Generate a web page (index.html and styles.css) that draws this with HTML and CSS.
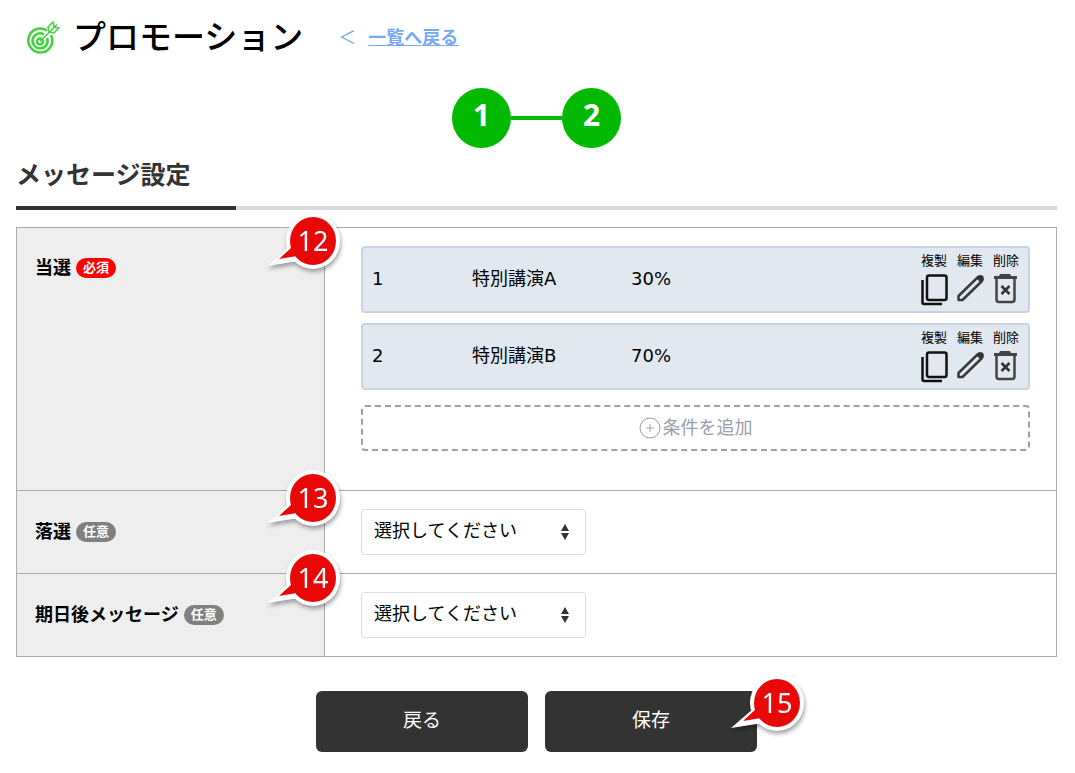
FILE: index.html
```html
<!DOCTYPE html>
<html lang="ja">
<head>
  <meta charset="UTF-8">
  <meta name="viewport" content="width=device-width, initial-scale=1">
  <title>プロモーション</title>
  <link rel="stylesheet" href="styles.css">
</head>
<body>

  <!-- 共通アイコン -->
  <svg class="sprite" aria-hidden="true">
    <symbol id="icon-copy" viewBox="0 0 27 32">
      <rect x="6" y="1.500" width="19.500" height="24.500" rx="2" fill="none" stroke="#111" stroke-width="2.500"/>
      <path d="M1.500 6v22.500q0 1.500 1.500 1.500h18" fill="none" stroke="#111" stroke-width="2.500"/>
    </symbol>
    <symbol id="icon-edit" viewBox="0 0 27 32">
      <path d="M1.500 26v-4L20.500 3.500q2-2 4 0t0 4L5.500 26z" fill="none" stroke="#3a3a3a" stroke-width="2.500" stroke-linejoin="round"/>
      <path d="M19.500 4.500l3-3q2-1 4 1v3l-3 3z" fill="#333"/>
    </symbol>
    <symbol id="icon-delete" viewBox="0 0 27 32">
      <path d="M7 0h10l1 2h6v3H1V2h5z" fill="#444"/>
      <path d="M3.500 4v21.500q0 2.500 2.500 2.500h13q2.500 0 2.500-2.500V4" fill="none" stroke="#444" stroke-width="2.500"/>
      <path d="M8.500 12l8 8M16.500 12l-8 8" fill="none" stroke="#333" stroke-width="2.500"/>
    </symbol>
    <symbol id="balloon" viewBox="0 0 84 64">
      <ellipse cx="50" cy="30" rx="27" ry="28" fill="#fff"/>
      <path d="M4 55L26 36l10 14z" fill="#fff"/>
      <ellipse cx="50" cy="30" rx="23" ry="24" fill="#e90808"/>
      <path d="M16 48L29 36l5 9z" fill="#e90808"/>
    </symbol>
  </svg>

  <header class="page-header">
    <svg class="logo" viewBox="0 0 33 34" fill="none" stroke="#43d13c" stroke-width="2.500">
      <path d="M20 9.500A12 12 0 1 0 24 14"/>
      <path d="M17 13.500A7.500 7.500 0 1 0 20 17"/>
      <circle cx="13" cy="20.500" r="3"/>
      <path d="M13 20.500L30 3.500M22 11l-1-5 5-5 1 5 5 1-5 5z" stroke-width="1.500"/>
    </svg>
    <h1>プロモーション</h1>
    <nav class="back">
      <span>＜</span>
      <a href="#">一覧へ戻る</a>
    </nav>
  </header>

  <main>
    <ol class="steps">
      <li>1</li>
      <li>2</li>
    </ol>

    <h2>メッセージ設定</h2>

    <form id="messageForm">
      <table class="settings">
        <tr>
          <th class="top" scope="row">
            <div class="label">当選 <span class="badge required">必須</span></div>
            <svg class="pin first"><use href="#balloon"/><text x="50" y="40">12</text></svg>
          </th>
          <td class="conditions">
            <div class="item">
              <span class="no">1</span>
              <span class="name">特別講演A</span>
              <span class="rate">30%</span>
              <div class="actions">
                <button type="button">複製<svg><use href="#icon-copy"/></svg></button>
                <button type="button">編集<svg><use href="#icon-edit"/></svg></button>
                <button type="button">削除<svg><use href="#icon-delete"/></svg></button>
              </div>
            </div>
            <div class="item">
              <span class="no">2</span>
              <span class="name">特別講演B</span>
              <span class="rate">70%</span>
              <div class="actions">
                <button type="button">複製<svg><use href="#icon-copy"/></svg></button>
                <button type="button">編集<svg><use href="#icon-edit"/></svg></button>
                <button type="button">削除<svg><use href="#icon-delete"/></svg></button>
              </div>
            </div>
            <button type="button" class="add">
              <svg viewBox="0 0 22 22" fill="none" stroke="#9a9eab">
                <circle cx="11" cy="11" r="10"/>
                <path d="M7 11h8M11 7v8"/>
              </svg>
              条件を追加
            </button>
          </td>
        </tr>
        <tr>
          <th scope="row">
            <div class="label"><label for="lose">落選</label> <span class="badge">任意</span></div>
            <svg class="pin"><use href="#balloon"/><text x="50" y="40">13</text></svg>
          </th>
          <td>
            <div class="select">
              <select id="lose" name="lose">
                <option value="">選択してください</option>
              </select>
              <svg viewBox="0 0 8 16"><path d="M4 0l4 7H0zM4 16L0 9h8z" fill="#333"/></svg>
            </div>
          </td>
        </tr>
        <tr>
          <th scope="row">
            <div class="label"><label for="expired">期日後メッセージ</label> <span class="badge">任意</span></div>
            <svg class="pin last"><use href="#balloon"/><text x="50" y="40">14</text></svg>
          </th>
          <td>
            <div class="select">
              <select id="expired" name="expired">
                <option value="">選択してください</option>
              </select>
              <svg viewBox="0 0 8 16"><path d="M4 0l4 7H0zM4 16L0 9h8z" fill="#333"/></svg>
            </div>
          </td>
        </tr>
      </table>

      <div class="buttons">
        <button type="button" class="btn">戻る</button>
        <div class="save">
          <button type="submit" class="btn">保存</button>
          <svg class="pin"><use href="#balloon"/><text x="50" y="40">15</text></svg>
        </div>
      </div>
    </form>
  </main>

</body>
</html>
```
FILE: styles.css
```css
* {
  box-sizing: border-box;
}
body {
  margin: 0;
  padding: 0 18px 20px 16px;
  font-family: "DejaVu Sans", "Noto Sans CJK JP", sans-serif;
  font-size: 18px;
  line-height: 26px;
  color: #000;
  background: #fff;
}
button, select {
  font: inherit;
  color: inherit;
}
button {
  cursor: pointer;
}
.sprite {
  display: none;
}
.page-header {
  display: flex;
  align-items: center;
  height: 76px;
  padding-left: 11px;
}
.logo {
  width: 33px;
  height: 34px;
}
h1 {
  margin: 0 35px 0 13px;
  font-size: 33px;
  font-weight: 500;
  line-height: 48px;
}
.back {
  display: flex;
  gap: 12px;
  color: #74a9fa;
}
.back a {
  color: inherit;
  font-weight: bold;
}
.steps {
  display: flex;
  justify-content: center;
  gap: 51px;
  margin: 12px 0 0;
  padding: 0;
  list-style: none;
}
.steps li {
  position: relative;
  width: 59px;
  height: 60px;
  border-radius: 50%;
  background: #00b900;
  color: #fff;
  font-family: "Noto Sans", sans-serif;
  font-size: 30px;
  font-weight: bold;
  line-height: 54px;
  text-align: center;
}
.steps li + li::before {
  content: "";
  position: absolute;
  right: 100%;
  top: 28px;
  width: 51px;
  height: 4px;
  background: #00b900;
}
h2 {
  position: relative;
  margin: 0 0 17px;
  padding: 10px 0 12px;
  border-bottom: 4px solid #d9d9d9;
  color: #333;
  font-size: 25px;
  line-height: 36px;
}
h2::after {
  content: "";
  position: absolute;
  left: 0;
  top: 100%;
  width: 220px;
  height: 4px;
  background: #333;
}
.settings {
  width: 100%;
  border-collapse: collapse;
}
th, td {
  border: 1px solid #aaa;
}
th {
  position: relative;
  width: 308px;
  padding: 0 18px;
  background: #eee;
  text-align: left;
}
th.top {
  padding-top: 27px;
  vertical-align: top;
}
td {
  padding: 18px 26px 18px 36px;
}
td.conditions {
  padding-bottom: 39px;
}
.label {
  display: flex;
  align-items: center;
  gap: 5px;
}
.badge {
  padding: 0 7px;
  border-radius: 10px;
  background: #808080;
  color: #fff;
  font-size: 13px;
  line-height: 20px;
}
.badge.required {
  background: #f00;
}
.item {
  display: flex;
  align-items: center;
  height: 67px;
  margin-bottom: 10px;
  padding: 0 9px 2px;
  border: 2px solid #c9d3e3;
  border-radius: 4px;
  background: #e1e8f0;
}
.no {
  width: 100px;
}
.name {
  width: 159px;
}
.actions {
  display: flex;
  gap: 10px;
  margin-left: auto;
}
.actions button {
  width: 26px;
  padding: 0;
  border: none;
  background: none;
  font-size: 13px;
  line-height: 20px;
  white-space: nowrap;
}
.actions svg {
  display: block;
  width: 27px;
  height: 32px;
  margin-top: 3px;
}
.add {
  display: flex;
  align-items: center;
  justify-content: center;
  gap: 2px;
  width: 100%;
  height: 46px;
  margin-top: 15px;
  border: 2px dashed #9a9eae;
  border-radius: 4px;
  background: #fff;
  color: #9a9eab;
}
.add svg {
  width: 22px;
  height: 22px;
}
.select {
  position: relative;
  width: 225px;
}
.select select {
  display: block;
  width: 100%;
  height: 46px;
  padding: 0 12px 3px;
  border: 1px solid #ddd;
  border-radius: 4px;
  background: #fff;
  appearance: none;
}
.select svg {
  position: absolute;
  right: 17px;
  top: 15px;
  width: 8px;
  height: 16px;
  pointer-events: none;
}
.buttons {
  display: flex;
  justify-content: center;
  gap: 17px;
  margin-top: 34px;
}
.btn {
  width: 212px;
  height: 61px;
  padding: 0 0 3px;
  border: none;
  border-radius: 6px;
  background: #333;
  color: #fff;
  font-size: 19px;
}
.save {
  position: relative;
}

/* 吹き出し番号 */
.pin {
  position: absolute;
  right: -23px;
  top: -23px;
  z-index: 1;
  width: 84px;
  height: 64px;
  overflow: visible;
  filter: drop-shadow(1px 3px 2px rgba(0, 0, 0, 0.35));
}
.pin.first {
  top: -17px;
}
.pin.last {
  top: -26px;
}
.save .pin {
  right: -54px;
  top: -18px;
}
.pin text {
  fill: #fff;
  font-family: "Noto Sans", sans-serif;
  font-size: 27px;
  font-weight: normal;
  text-anchor: middle;
}
```
